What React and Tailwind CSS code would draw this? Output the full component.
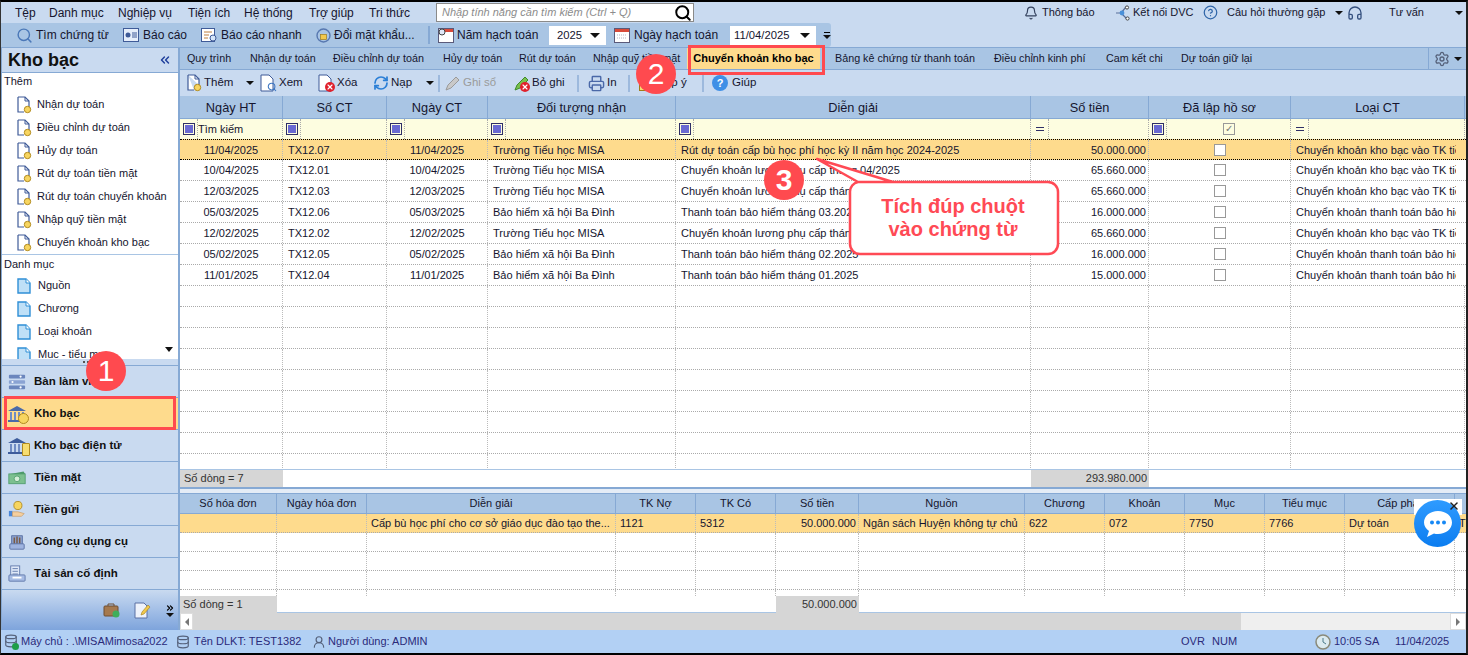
import React from 'react';
import { Bell, CircleHelp, Headphones, Search, Settings, ChevronsLeft, ChevronsRight, Database, UserRound, RefreshCw, Printer, X } from 'lucide-react';

const MENU = [
  { label: 'Tệp', w: 'w-[34px]' },
  { label: 'Danh mục', w: 'w-[69px]' },
  { label: 'Nghiệp vụ', w: 'w-[70px]' },
  { label: 'Tiện ích', w: 'w-[56px]' },
  { label: 'Hệ thống', w: 'w-[65px]' },
  { label: 'Trợ giúp', w: 'w-[60px]' },
  { label: 'Tri thức', w: 'w-[67px]' },
];

const TABS = [
  { label: 'Quy trình', w: 'w-[63px]' },
  { label: 'Nhận dự toán', w: 'w-[83px]' },
  { label: 'Điều chỉnh dự toán', w: 'w-[110px]' },
  { label: 'Hủy dự toán', w: 'w-[76px]' },
  { label: 'Rút dự toán', w: 'w-[74px]' },
  { label: 'Nhập quỹ tiền mặt', w: 'w-[101px]' },
  { label: 'Chuyển khoản kho bạc', w: 'w-[133px]', active: true },
  { label: 'Bảng kê chứng từ thanh toán', w: 'w-[159px]' },
  { label: 'Điều chỉnh kinh phí', w: 'w-[112px]' },
  { label: 'Cam kết chi', w: 'w-[75px]' },
  { label: 'Dự toán giữ lại', w: 'w-[100px]' },
];

const ADD_ITEMS = ['Nhận dự toán', 'Điều chỉnh dự toán', 'Hủy dự toán', 'Rút dự toán tiền mặt', 'Rút dự toán chuyển khoản', 'Nhập quỹ tiền mặt', 'Chuyển khoản kho bạc'];
const CATALOG_ITEMS = ['Nguồn', 'Chương', 'Loại khoản', 'Mục - tiểu mục'];

const MAIN_COLS = 'grid grid-cols-[103px_104px_101px_188px_355px_118px_142px_174px]';
const SUB_COLS = 'grid grid-cols-[97px_90px_249px_80px_80px_83px_166px_80px_80px_80px_80px_110px_90px]';

const MAIN_ROWS = [
  ['11/04/2025', 'TX12.07', '11/04/2025', 'Trường Tiểu học MISA', 'Rút dự toán cấp bù học phí học kỳ II năm học 2024-2025', '50.000.000', 'Chuyển khoản kho bạc vào TK tiền gửi'],
  ['10/04/2025', 'TX12.01', '10/04/2025', 'Trường Tiểu học MISA', 'Chuyển khoản lương phụ cấp tháng 04/2025', '65.660.000', 'Chuyển khoản kho bạc vào TK tiền gửi'],
  ['12/03/2025', 'TX12.03', '12/03/2025', 'Trường Tiểu học MISA', 'Chuyển khoản lương phụ cấp tháng 03.2025', '65.660.000', 'Chuyển khoản kho bạc vào TK tiền gửi'],
  ['05/03/2025', 'TX12.06', '05/03/2025', 'Bảo hiểm xã hội Ba Đình', 'Thanh toán bảo hiểm tháng 03.2025', '16.000.000', 'Chuyển khoản thanh toán bảo hiểm'],
  ['12/02/2025', 'TX12.02', '12/02/2025', 'Trường Tiểu học MISA', 'Chuyển khoản lương phụ cấp tháng 02.2025', '65.660.000', 'Chuyển khoản kho bạc vào TK tiền gửi'],
  ['05/02/2025', 'TX12.05', '05/02/2025', 'Bảo hiểm xã hội Ba Đình', 'Thanh toán bảo hiểm tháng 02.2025', '16.000.000', 'Chuyển khoản thanh toán bảo hiểm'],
  ['11/01/2025', 'TX12.04', '11/01/2025', 'Bảo hiểm xã hội Ba Đình', 'Thanh toán bảo hiểm tháng 01.2025', '15.000.000', 'Chuyển khoản thanh toán bảo hiểm'],
];

const MAIN_HEAD = ['Ngày HT', 'Số CT', 'Ngày CT', 'Đối tượng nhận', 'Diễn giải', 'Số tiền', 'Đã lập hồ sơ', 'Loại CT'];
const SUB_HEAD = ['Số hóa đơn', 'Ngày hóa đơn', 'Diễn giải', 'TK Nợ', 'TK Có', 'Số tiền', 'Nguồn', 'Chương', 'Khoản', 'Mục', 'Tiểu mục', 'Cấp phát', ''];
const SUB_ROW = ['', '', 'Cấp bù học phí cho cơ sở giáo dục đào tạo the...', '1121', '5312', '50.000.000', 'Ngân sách Huyện không tự chủ', '622', '072', '7750', '7766', 'Dự toán', 'T'];

function DocAdd() {
  return (
    <svg width="16" height="18" viewBox="0 0 16 18" className="shrink-0">
      <path d="M2 1h7l4 4v6M2 1v15h6" fill="#fff" stroke="#3f5b98" strokeWidth="1.2" />
      <path d="M9 1v4h4" fill="none" stroke="#3f5b98" />
      <circle cx="11.5" cy="13.5" r="3.2" fill="#f7d560" stroke="#b18a1e" />
    </svg>
  );
}

function DocBlue() {
  return (
    <svg width="14" height="16" viewBox="0 0 14 16" className="shrink-0">
      <path d="M1 1h8l4 4v10H1z" fill="#bfe0f7" stroke="#2f8fd6" strokeWidth="1.4" />
      <path d="M9 1v4h4" fill="#fff" stroke="#2f8fd6" />
    </svg>
  );
}

function FilterBox() {
  return (
    <span className="inline-flex h-[12px] w-[12px] items-center justify-center border border-[#2e2e66]">
      <span className="block h-[8px] w-[8px] bg-[#6a6ad2]" />
    </span>
  );
}

function Bank({ fill = '#4a6aa8' }) {
  return (
    <svg width="20" height="20" viewBox="0 0 20 20">
      <path d="M1 7l9-5 9 5z" fill={fill} />
      <path d="M3 8h2v8H3zM7 8h2v8H7zM11 8h2v8h-2zM15 8h2v8h-2z" fill="#6f8cc4" />
      <path d="M1 16h18v2H1z" fill={fill} />
    </svg>
  );
}

function NavIcon({ kind }) {
  if (kind === 'desk') {
    return (
      <svg width="20" height="18" viewBox="0 0 20 18">
        <rect x="1" y="1" width="18" height="4" rx="1" fill="#6b86bd" />
        <rect x="1" y="7" width="18" height="4" rx="1" fill="#8aa3d3" />
        <rect x="1" y="13" width="18" height="4" rx="1" fill="#6b86bd" />
        <circle cx="14" cy="3" r="1.2" fill="#fff" />
        <circle cx="5" cy="9" r="1.2" fill="#fff" />
        <circle cx="14" cy="15" r="1.2" fill="#fff" />
      </svg>
    );
  }
  if (kind === 'bank') {
    return (
      <span className="relative inline-block h-[20px] w-[20px]">
        <Bank />
        <span className="absolute bottom-0 right-[-2px] h-[11px] w-[11px] rounded-full border border-[#b18a1e] bg-[#f7d560]" />
      </span>
    );
  }
  if (kind === 'ebank') {
    return (
      <span className="relative inline-block h-[20px] w-[20px]">
        <Bank fill="#3d5c9c" />
        <span className="absolute bottom-0 right-[-3px] h-[13px] w-[8px] rounded-[1px] border border-[#b18a1e] bg-[#f7dd70]" />
      </span>
    );
  }
  if (kind === 'cash') {
    return (
      <svg width="22" height="18" viewBox="0 0 22 18">
        <path d="M3 4l16-3 2 3z" fill="#4d9a6a" />
        <rect x="1" y="4" width="20" height="12" fill="#7cc08f" stroke="#4d9a6a" />
        <circle cx="11" cy="10" r="3.5" fill="#d5efd8" stroke="#4d9a6a" />
      </svg>
    );
  }
  if (kind === 'deposit') {
    return (
      <svg width="20" height="20" viewBox="0 0 20 20">
        <circle cx="11" cy="5" r="4.5" fill="#f7d560" stroke="#b18a1e" />
        <rect x="1" y="11" width="4" height="6" fill="#4a86d8" />
        <path d="M5 12h6l7 2-3 3H5z" fill="#f5cf9f" stroke="#c29660" strokeWidth=".7" />
      </svg>
    );
  }
  if (kind === 'tools') {
    return (
      <svg width="20" height="20" viewBox="0 0 20 20">
        <path d="M4 3h12v10H4z" fill="#8aa0cc" stroke="#5a70a4" />
        <path d="M7 5v7M10 4v8M13 5v7" stroke="#7a5a44" strokeWidth="1.6" />
        <rect x="2" y="12" width="16" height="6" rx="1" fill="#9fb4e0" stroke="#5a70a4" />
      </svg>
    );
  }
  return (
    <svg width="20" height="20" viewBox="0 0 20 20">
      <rect x="3" y="1" width="10" height="13" fill="#dfe8f8" stroke="#6078aa" />
      <path d="M5 4h6M5 7h6M5 10h6" stroke="#6078aa" />
      <rect x="1" y="11" width="18" height="7" rx="1" fill="#a7bce4" stroke="#6078aa" />
      <rect x="5" y="13" width="10" height="2" fill="#fff" />
    </svg>
  );
}

const NAV = [
  { label: 'Bàn làm việc', kind: 'desk' },
  { label: 'Kho bạc', kind: 'bank', active: true },
  { label: 'Kho bạc điện tử', kind: 'ebank' },
  { label: 'Tiền mặt', kind: 'cash' },
  { label: 'Tiền gửi', kind: 'deposit' },
  { label: 'Công cụ dụng cụ', kind: 'tools' },
  { label: 'Tài sản cố định', kind: 'asset' },
];

function Caret({ className = '' }) {
  return <span className={`inline-block h-0 w-0 border-x-[4px] border-t-[4px] border-x-transparent border-t-[#111] ${className}`} />;
}

function Sep() {
  return <span className="mx-[4px] block h-[17px] w-[2px] shrink-0 bg-[#9db9dd]" />;
}

function TopBar() {
  return (
    <div className="flex h-[21px] items-center bg-[#c9daf0] text-[12px] text-[#15152e]">
      <span className="w-[14px] shrink-0" />
      {MENU.map((m) => (
        <span key={m.label} className={`${m.w} shrink-0 whitespace-nowrap`}>{m.label}</span>
      ))}
      <div className="flex h-[19px] w-[258px] shrink-0 items-center justify-between border border-[#8a8a8a] bg-white pl-[5px] pr-[1px] text-[11px] italic text-[#8c8c8c]">
        Nhập tính năng cần tìm kiếm (Ctrl + Q)
        <Search size={18} strokeWidth={2.6} className="text-black" />
      </div>
      <div className="flex items-center text-[11px]">
        <Bell size={14} className="ml-[330px] shrink-0 text-[#33415e]" />
        <span className="ml-[4px] w-[73px] shrink-0">Thông báo</span>
        <svg width="17" height="16" viewBox="0 0 17 16" className="shrink-0">
          <path d="M1 8h5M6 8l5-6M6 8l6 6" stroke="#5a6f9a" strokeWidth="1.2" fill="none" />
          <circle cx="7" cy="8" r="2.4" fill="#4a90d8" />
          <circle cx="12" cy="2.5" r="1.6" fill="#fff" stroke="#444" />
          <circle cx="12.5" cy="13.5" r="1.6" fill="#fff" stroke="#444" />
        </svg>
        <span className="ml-[1px] w-[70px] shrink-0">Kết nối DVC</span>
        <CircleHelp size={15} className="shrink-0 text-[#2f65a8]" />
        <span className="ml-[9px] w-[108px] shrink-0">Câu hỏi thường gặp</span>
        <Caret className="shrink-0" />
        <Headphones size={16} className="ml-[4px] shrink-0 text-[#35507f]" />
        <span className="ml-[26px] w-[66px] shrink-0">Tư vấn</span>
        <Caret className="shrink-0" />
      </div>
    </div>
  );
}

function Combo({ value, w }) {
  return (
    <div className={`${w} flex h-[21px] shrink-0 items-center justify-between border border-[#a9c5e4] bg-white pr-[6px] text-[11.25px]`}>
      {value}
      <Caret className="border-x-[5px] border-t-[5px]" />
    </div>
  );
}

function QuickBar() {
  return (
    <div className="flex h-[24px] bg-[#c9daf0]">
      <div className="flex w-[830px] items-center rounded-r-[3px] bg-[#a9c5e4] text-[12px] text-[#15152e]">
        <Search size={17} className="ml-[15px] shrink-0 text-[#4b78b8]" />
        <span className="ml-[3px] w-[87px] shrink-0">Tìm chứng từ</span>
        <svg width="16" height="14" viewBox="0 0 16 14" className="shrink-0">
          <rect x=".5" y=".5" width="15" height="13" fill="#e6eefb" stroke="#3f5b98" />
          <circle cx="5" cy="7" r="2.500" fill="#3f5b98" />
          <path d="M9 5h5M9 7h5M9 9h5" stroke="#3f5b98" />
        </svg>
        <span className="ml-[4px] w-[58px] shrink-0">Báo cáo</span>
        <svg width="17" height="15" viewBox="0 0 17 15" className="shrink-0">
          <rect x=".5" y=".5" width="13" height="13" fill="#fff" stroke="#3f5b98" />
          <path d="M3 4h8M3 7h5M3 10h4" stroke="#c08040" />
          <circle cx="12" cy="10" r="3" fill="#d6e6fa" stroke="#3f5b98" />
        </svg>
        <span className="ml-[3px] w-[95px] shrink-0">Báo cáo nhanh</span>
        <svg width="15" height="15" viewBox="0 0 15 15" className="shrink-0">
          <circle cx="7.5" cy="7.5" r="6.5" fill="none" stroke="#5878b0" strokeWidth="1.4" />
          <rect x="4.5" y="6.5" width="6" height="5" fill="#f2c94c" stroke="#a07c1a" strokeWidth=".7" />
        </svg>
        <span className="ml-[3px] w-[94px] shrink-0 whitespace-nowrap">Đổi mặt khẩu...</span>
        <span className="h-[18px] w-[2px] shrink-0 bg-[#86a9d4]" />
        <svg width="16" height="15" viewBox="0 0 16 15" className="ml-[8px] shrink-0">
          <rect x=".5" y=".5" width="15" height="14" fill="#fff" stroke="#5a5a7a" />
          <rect x="6" y="1" width="9" height="3" fill="#d84a3a" />
          <circle cx="4" cy="4" r="3" fill="#dfe8f8" stroke="#444" />
        </svg>
        <span className="ml-[3px] w-[91px] shrink-0">Năm hạch toán</span>
        <Combo value="2025" w="w-[59px] pl-[8px]" />
        <svg width="16" height="15" viewBox="0 0 16 15" className="ml-[7px] shrink-0">
          <rect x=".5" y=".5" width="15" height="14" fill="#fff" stroke="#5a5a7a" />
          <rect x="1" y="1" width="14" height="3" fill="#d84a3a" />
          <path d="M3 7h10M3 10h10" stroke="#b5b5c5" strokeDasharray="1 1" />
        </svg>
        <span className="ml-[4px] w-[95px] shrink-0">Ngày hạch toán</span>
        <Combo value="11/04/2025" w="w-[88px] pl-[4px]" />
        <span className="ml-[6px] flex w-[7px] flex-col items-center gap-[2px]">
          <span className="block h-px w-[6px] bg-black" />
          <Caret className="border-x-[3px] border-t-[3px]" />
        </span>
      </div>
    </div>
  );
}

function TabBar() {
  return (
    <div className="flex h-[23px] items-center border-y border-[#86a9d4] bg-[#a9c5e4] text-[10.75px] text-[#15152e]">
      {TABS.map((t) => (
        <span
          key={t.label}
          className={`${t.w} flex h-full shrink-0 items-center whitespace-nowrap ${t.active ? 'mr-[8px] justify-center bg-[#fedb8d] text-[11px] font-bold text-black' : 'pl-[7px]'}`}
        >
          {t.label}
        </span>
      ))}
      <div className="ml-auto flex h-full w-[38px] items-center gap-[4px] border-l border-[#86a9d4] pl-[5px]">
        <Settings size={16} className="text-[#55617a]" />
        <Caret />
      </div>
    </div>
  );
}

function Tool({ icon, label, w, muted }) {
  return (
    <span className={`${w} flex shrink-0 items-center gap-[2px] whitespace-nowrap ${muted ? 'text-[#9a9a9a]' : ''}`}>
      {icon}
      {label}
    </span>
  );
}

function BadDoc({ Icon }) {
  return (
    <span className="relative inline-flex h-[18px] w-[17px]">
      <svg width="14" height="18" viewBox="0 0 14 18">
        <path d="M1 1h8l4 4v12H1z" fill="#fff" stroke="#3f5b98" />
      </svg>
      {Icon}
    </span>
  );
}

function ActionBar() {
  return (
    <div className="flex h-[26px] items-center bg-[#c9daf0] pl-[6px] text-[11.5px] text-[#15152e]">
      <Tool w="w-[60px]" label="Thêm" icon={<DocAdd />} />
      <Caret className="mr-[6px] shrink-0" />
      <Tool w="w-[58px]" label="Xem" icon={
        <BadDoc Icon={<Search size={10} strokeWidth={2.5} className="absolute bottom-0 right-0 text-[#3a74c0]" />} />
      } />
      <Tool w="w-[55px]" label="Xóa" icon={
        <BadDoc Icon={<span className="absolute bottom-0 right-0 flex h-[10px] w-[10px] items-center justify-center rounded-full bg-[#e0202c]"><X size={8} strokeWidth={3.5} className="text-white" /></span>} />
      } />
      <Tool w="w-[53px]" label="Nạp" icon={<RefreshCw size={16} strokeWidth={2.6} className="text-[#2b7fd6]" />} />
      <Caret className="shrink-0" />
      <Sep />
      <Tool w="w-[69px]" muted label="Ghi sổ" icon={
        <svg width="17" height="17" viewBox="0 0 17 17"><path d="M2 15l2-5 8-8 3 3-8 8z" fill="#c9c9c9" stroke="#9a9a9a" /></svg>
      } />
      <Tool w="w-[60px]" label="Bỏ ghi" icon={
        <span className="relative inline-flex h-[17px] w-[17px]">
          <svg width="17" height="17" viewBox="0 0 17 17"><path d="M2 15l2-5 8-8 3 3-8 8z" fill="#7ac04c" stroke="#3f8a2c" /></svg>
          <span className="absolute bottom-0 right-0 flex h-[10px] w-[10px] items-center justify-center rounded-full bg-[#e0202c]"><X size={8} strokeWidth={3.5} className="text-white" /></span>
        </span>
      } />
      <Sep />
      <span className="w-[5px] shrink-0" />
      <Tool w="w-[36px]" label="In" icon={<Printer size={17} className="text-[#4a68a8]" />} />
      <Sep />
      <span className="w-[5px] shrink-0" />
      <Tool w="w-[59px]" label="Góp ý" icon={
        <svg width="15" height="15" viewBox="0 0 15 15"><rect x=".5" y=".5" width="14" height="14" fill="#f7dd70" stroke="#a07c1a" /></svg>
      } />
      <Sep />
      <span className="w-[4px] shrink-0" />
      <Tool w="w-[60px]" label="Giúp" icon={
        <span className="mr-[2px] flex h-[16px] w-[16px] items-center justify-center rounded-full bg-[#3f8fe6] text-[11px] font-bold text-white">?</span>
      } />
    </div>
  );
}

function MainGrid() {
  const emptyRows = Array.from({ length: 10 });
  return (
    <div className="flex h-[393px] flex-col border-b-2 border-[#86a9d4] text-[11px] text-[#15152e]">
      <div className={`${MAIN_COLS} h-[23px] shrink-0 border-b border-[#86a9d4] bg-[#a9c5e4] text-[12.75px] text-[#15152e]`}>
        {MAIN_HEAD.map((h) => (
          <div key={h} className="flex items-center justify-center border-r border-[#86a9d4] pt-[1px]">{h}</div>
        ))}
      </div>
      <div className={`${MAIN_COLS} h-[20px] shrink-0 bg-[#fdfde0]`}>
        {MAIN_HEAD.map((h, i) => {
          const op = h === 'Số tiền' || h === 'Loại CT';
          return (
            <div key={h} className="flex items-center border-r border-dotted border-[#aaa]">
              <span className="flex h-full w-[18px] shrink-0 items-center justify-center border-r border-dotted border-[#aaa]">
                {op ? <span className="block h-[4px] w-[8px] border-y border-[#2e2e66]" /> : <FilterBox />}
              </span>
              {i === 0 && <span className="whitespace-nowrap pt-[1px]">Tìm kiếm</span>}
              {h === 'Đã lập hồ sơ' && (
                <span className="ml-[56px] flex h-[12px] w-[12px] items-center justify-center border border-[#999] text-[10px] leading-none text-[#777]">✓</span>
              )}
            </div>
          );
        })}
      </div>
      <div className="flex-1 overflow-hidden">
        {MAIN_ROWS.map((r, i) => (
          <div
            key={r[1]}
            className={`${MAIN_COLS} h-[21px] border-b ${i === 0 ? 'border-t border-dotted border-black bg-[#fedb8d]' : 'border-dotted border-[#aaa]'}`}
          >
            <div className="flex items-center justify-center border-r border-dotted border-[#bbb] pt-[1px]">{r[0]}</div>
            <div className="flex items-center border-r border-dotted border-[#bbb] pl-[5px] pt-[1px]">{r[1]}</div>
            <div className="flex items-center justify-center border-r border-dotted border-[#bbb] pt-[1px]">{r[2]}</div>
            <div className="flex items-center whitespace-nowrap border-r border-dotted border-[#bbb] pl-[5px] pt-[1px]">{r[3]}</div>
            <div className="flex items-center whitespace-nowrap border-r border-dotted border-[#bbb] pl-[5px] pt-[1px]">{r[4]}</div>
            <div className="flex items-center justify-end border-r border-dotted border-[#bbb] pr-[2px] pt-[1px]">{r[5]}</div>
            <div className="flex items-center justify-center border-r border-dotted border-[#bbb]">
              <span className="h-[12px] w-[12px] border border-[#999] bg-white" />
            </div>
            <div className="pl-[5px] leading-[20px]">
              <div className="w-[160px] overflow-hidden whitespace-nowrap">{r[6]}</div>
            </div>
          </div>
        ))}
        {emptyRows.map((_, i) => (
          <div key={i} className={`${MAIN_COLS} h-[21px] border-b border-dotted border-[#aaa]`}>
            {MAIN_HEAD.map((h) => (
              <div key={h} className="border-r border-dotted border-[#bbb]" />
            ))}
          </div>
        ))}
      </div>
      <div className={`${MAIN_COLS} h-[18px] shrink-0 border-t border-[#a9c5e4]`}>
        <div className="flex items-center bg-[#d6d6d6] pl-[4px] text-[#333]">Số dòng = 7</div>
        <div className="col-span-4" />
        <div className="flex items-center justify-end bg-[#d6d6d6] pr-[2px] text-[#333]">293.980.000</div>
      </div>
    </div>
  );
}

function SubGrid() {
  return (
    <div className="flex h-[120px] flex-col border-b border-[#a9c5e4] text-[11px] text-[#15152e]">
      <div className={`${SUB_COLS} h-[21px] shrink-0 border-y border-[#86a9d4] bg-[#a9c5e4]`}>
        {SUB_HEAD.map((h, i) => (
          <div key={i} className="flex items-center justify-center whitespace-nowrap border-r border-[#86a9d4]">{h}</div>
        ))}
      </div>
      <div className="flex-1 overflow-hidden">
        <div className={`${SUB_COLS} h-[19px] border-b border-dotted border-[#aaa] bg-[#fedb8d]`}>
          {SUB_ROW.map((c, i) => (
            <div key={i} className={`flex items-center overflow-hidden whitespace-nowrap border-r border-dotted border-[#bbb] ${i === 5 ? 'justify-end pr-[2px]' : 'pl-[4px]'}`}>{c}</div>
          ))}
        </div>
        {[0, 1, 2, 3].map((n) => (
          <div key={n} className={`${SUB_COLS} h-[19px] border-b border-dotted border-[#aaa]`}>
            {SUB_HEAD.map((_, i) => (
              <div key={i} className="border-r border-dotted border-[#bbb]" />
            ))}
          </div>
        ))}
      </div>
      <div className={`${SUB_COLS} h-[16px] shrink-0`}>
        <div className="flex items-center bg-[#d6d6d6] pl-[3px] text-[#333]">Số dòng = 1</div>
        <div className="col-span-4" />
        <div className="flex items-center justify-end bg-[#d6d6d6] pr-[2px] text-[#333]">50.000.000</div>
      </div>
    </div>
  );
}

function ScrollBar() {
  return (
    <div className="flex h-[17px] items-stretch bg-[#efefef]">
      <span className="flex w-[13px] shrink-0 items-center justify-center border border-[#ddd] bg-white">
        <span className="h-0 w-0 border-y-[4px] border-r-[4px] border-y-transparent border-r-[#777]" />
      </span>
      <span className="w-[1048px] shrink-0 bg-[#d6d6d6]" />
      <span className="flex-1" />
      <span className="flex w-[16px] shrink-0 items-center justify-center border border-[#ddd] bg-white">
        <span className="h-0 w-0 border-y-[4px] border-l-[4px] border-y-transparent border-l-[#777]" />
      </span>
    </div>
  );
}

function Sidebar() {
  return (
    <aside className="flex w-[179px] shrink-0 flex-col border-r-2 border-[#86a9d4] border-l border-l-[#86a9d4]">
      <div className="flex h-[26px] shrink-0 items-center justify-between border-y border-[#86a9d4] bg-[#c9daf0] pl-[6px] pr-[6px]">
        <span className="text-[18px] font-bold text-[#111]">Kho bạc</span>
        <ChevronsLeft size={14} strokeWidth={2.5} className="text-[#1f3f9c]" />
      </div>
      <div className="relative h-[286px] shrink-0 overflow-hidden bg-white text-[11px] text-[#15152e]">
        <div className="h-[20px] pl-[2px] leading-[17px]">Thêm</div>
        <div className="border-b border-[#a9c5e4]">
          {ADD_ITEMS.map((t) => (
            <div key={t} className="flex h-[23px] items-center gap-[5px] pl-[14px] whitespace-nowrap"><DocAdd />{t}</div>
          ))}
        </div>
        <div className="h-[19px] pl-[2px] leading-[18px]">Danh mục</div>
        {CATALOG_ITEMS.map((t) => (
          <div key={t} className="flex h-[23px] items-center gap-[7px] pl-[15px] whitespace-nowrap"><DocBlue />{t}</div>
        ))}
        <Caret className="absolute bottom-[7px] right-[5px] border-x-[4px] border-t-[5px]" />
      </div>
      <div className="flex h-[7px] shrink-0 items-center justify-center border-b border-[#86a9d4] bg-[#c9daf0]">
        <span className="block h-[2px] w-[14px] border-t-2 border-dotted border-[#555]" />
      </div>
      {NAV.map((n) => (
        <div
          key={n.label}
          className={`flex h-[32px] shrink-0 items-center gap-[8px] border-b border-[#86a9d4] pl-[6px] text-[11.5px] font-bold text-[#111] ${n.active ? 'bg-[#fedb8d]' : 'bg-[#c9daf0]'}`}
        >
          <span className="flex w-[18px] shrink-0 justify-center"><NavIcon kind={n.kind} /></span>
          {n.label}
        </div>
      ))}
      <div className="flex flex-1 items-center justify-end gap-[14px] bg-gradient-to-b from-[#c9daf0] to-[#7ea4dc] pr-[3px]">
        <svg width="17" height="16" viewBox="0 0 17 16">
          <rect x="1" y="4" width="14" height="10" rx="1" fill="#a5794f" stroke="#6e4f33" />
          <path d="M5 4V2h6v2" fill="none" stroke="#6e4f33" />
          <circle cx="13" cy="12" r="3.500" fill="#3fae5a" />
        </svg>
        <svg width="17" height="17" viewBox="0 0 17 17">
          <path d="M1 1h9l3 3v12H1z" fill="#eef2fb" stroke="#5a70a4" />
          <path d="M7 13l1-3 6-7 2 2-6 7z" fill="#f2c94c" stroke="#a07c1a" strokeWidth=".6" />
        </svg>
        <span className="flex flex-col items-center">
          <ChevronsRight size={10} strokeWidth={3} className="text-black" />
          <Caret />
        </span>
      </div>
    </aside>
  );
}

function StatusBar() {
  return (
    <div className="flex h-[23px] shrink-0 items-center bg-[#b2d0f4] text-[11px] text-[#2b2a7a]">
      <span className="relative ml-[3px] inline-flex h-[16px] w-[15px] shrink-0">
        <Database size={14} className="text-[#55617a]" />
        <span className="absolute bottom-0 right-0 h-[7px] w-[7px] rounded-full bg-[#1f9e4a]" />
      </span>
      <span className="ml-[2px] w-[155px] shrink-0 whitespace-nowrap">Máy chủ : .\MISAMimosa2022</span>
      <Database size={14} className="shrink-0 text-[#55617a]" />
      <span className="ml-[4px] w-[118px] shrink-0 whitespace-nowrap">Tên DLKT: TEST1382</span>
      <UserRound size={14} className="shrink-0 text-[#55617a]" />
      <span className="ml-[2px] w-[853px] shrink-0 whitespace-nowrap">Người dùng: ADMIN</span>
      <span className="w-[31px] shrink-0">OVR</span>
      <span className="w-[103px] shrink-0">NUM</span>
      <svg width="16" height="16" viewBox="0 0 16 16" className="shrink-0">
        <circle cx="8" cy="8" r="7" fill="#dbeaf0" stroke="#8a8a7a" strokeWidth="1.5" />
        <path d="M8 4v4l3 2" stroke="#4a7a8a" fill="none" />
      </svg>
      <span className="ml-[3px] w-[61px] shrink-0">10:05 SA</span>
      <span className="shrink-0">11/04/2025</span>
    </div>
  );
}

function Badge({ className, children }) {
  return (
    <span className={`absolute flex h-[40px] w-[40px] items-center justify-center rounded-full bg-[#ff4a4f] text-[30px] leading-none text-white ${className}`}>
      {children}
    </span>
  );
}

function Callout() {
  return (
    <>
      <svg width="260" height="110" viewBox="0 0 260 110" className="absolute left-[809px] top-[149px]">
        <path
          d="M48 31H238a10 10 0 0 1 10 10V93a10 10 0 0 1-10 10H50a10 10 0 0 1-10-10V41a10 10 0 0 1 8-10L7 8l76 23z"
          fill="#fff"
          stroke="#ff4a55"
          strokeWidth="2.5"
          strokeLinejoin="round"
        />
      </svg>
      <div className="absolute left-[849px] top-[193px] w-[206px] text-center text-[20px] font-bold leading-[23px] text-[#ff4a55]">
        Tích đúp chuột
        <br />
        vào chứng từ
      </div>
    </>
  );
}

function ChatWidget() {
  return (
    <div className="absolute left-[1413px] top-[497px] h-[49px] w-[48px]">
      <div className="absolute right-0 top-0 h-[16px] w-[48px] bg-white" />
      <div className="absolute left-0 top-[1px] flex h-[47px] w-[47px] items-center justify-center rounded-full bg-gradient-to-b from-[#2e9bff] to-[#0a7df0]">
        <svg width="32" height="30" viewBox="0 0 32 30">
          <path d="M16 2c8 0 14 5 14 11.500S24 25 16 25c-1.500 0-3 0-4-.5L5 28l2-6c-3-2-5-5-5-8.500C2 7 8 2 16 2z" fill="#fff" />
          <circle cx="10" cy="13.500" r="2" fill="#1688f5" />
          <circle cx="16" cy="13.500" r="2" fill="#1688f5" />
          <circle cx="22" cy="13.500" r="2" fill="#1688f5" />
        </svg>
      </div>
      <X size={12} strokeWidth={3} className="absolute right-[2px] top-[1px] text-[#222]" />
    </div>
  );
}

export default function App() {
  return (
    <div className="relative flex h-[655px] w-[1468px] flex-col overflow-hidden border-y-2 border-l border-r-2 border-y-black border-l-[#333] border-r-[#222] bg-[#c9daf0] font-['Liberation_Sans',Arial,sans-serif]">
      <TopBar />
      <QuickBar />
      <div className="flex min-h-0 flex-1">
        <Sidebar />
        <main className="flex min-w-0 flex-1 flex-col bg-white">
          <TabBar />
          <ActionBar />
          <MainGrid />
          <div className="h-[4px] shrink-0 bg-[#e4ecf6]" />
          <SubGrid />
          <ScrollBar />
        </main>
      </div>
      <StatusBar />

      {/* annotations drawn on top of the screenshot */}
      <div className="absolute left-[3px] top-[394px] h-[34px] w-[172px] border-[3px] border-[#ff4a4f]" />
      <div className="absolute left-[687px] top-[43px] h-[30px] w-[137px] border-[3px] border-[#ff4a4f]" />
      <Badge className="left-[85px] top-[349px]">1</Badge>
      <Badge className="left-[635px] top-[52px]">2</Badge>
      <Callout />
      <Badge className="left-[763px] top-[158px] font-bold">3</Badge>
      <ChatWidget />
    </div>
  );
}
